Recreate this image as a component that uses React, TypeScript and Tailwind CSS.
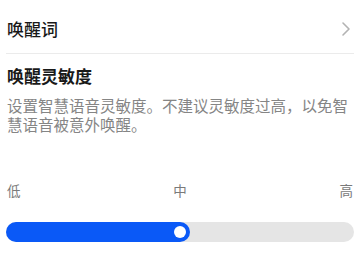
import React from "react";

export default function App() {
  return (
    <div
      className="w-[360px] h-[270px] bg-white px-[6px] overflow-hidden"
      style={{ fontFamily: '"Noto Sans CJK SC", "Noto Sans", sans-serif' }}
    >
      <div className="h-[53px] pt-[5px] flex items-center justify-between">
        <span className="text-[17px] leading-[24px] font-medium text-[#191919] pl-[1px]">唤醒词</span>
        <svg width="10" height="16" viewBox="0 0 10 16" className="mr-[3px]">
          <path d="M2 2 L8 8 L2 14" fill="none" stroke="#b3b3b3" strokeWidth="1.6" strokeLinecap="round" strokeLinejoin="round" />
        </svg>
      </div>
      <div className="h-px bg-[#ebebeb]" />
      <div className="mt-[10px] text-[17px] leading-[24px] font-bold text-[#191919] pl-[1px]">唤醒灵敏度</div>
      <div className="mt-[8px] text-[15.5px] leading-[19px] text-[#858585] pl-[1px]">
        设置智慧语音灵敏度。不建议灵敏度过高，以免智慧语音被意外唤醒。
      </div>
      <div className="mt-[46px] flex justify-between text-[13.5px] leading-[20px] text-[#7a7a7a] pl-[1px] pr-[1px]">
        <span>低</span>
        <span>中</span>
        <span>高</span>
      </div>
      <div className="mt-[22px] relative h-[20px] rounded-full bg-[#e5e5e5]">
        <div className="absolute left-0 top-0 h-[20px] w-[184px] rounded-full bg-[#0a59f7]" />
        <div className="absolute left-[168px] top-[4px] w-[12px] h-[12px] rounded-full bg-white" />
      </div>
    </div>
  );
}
